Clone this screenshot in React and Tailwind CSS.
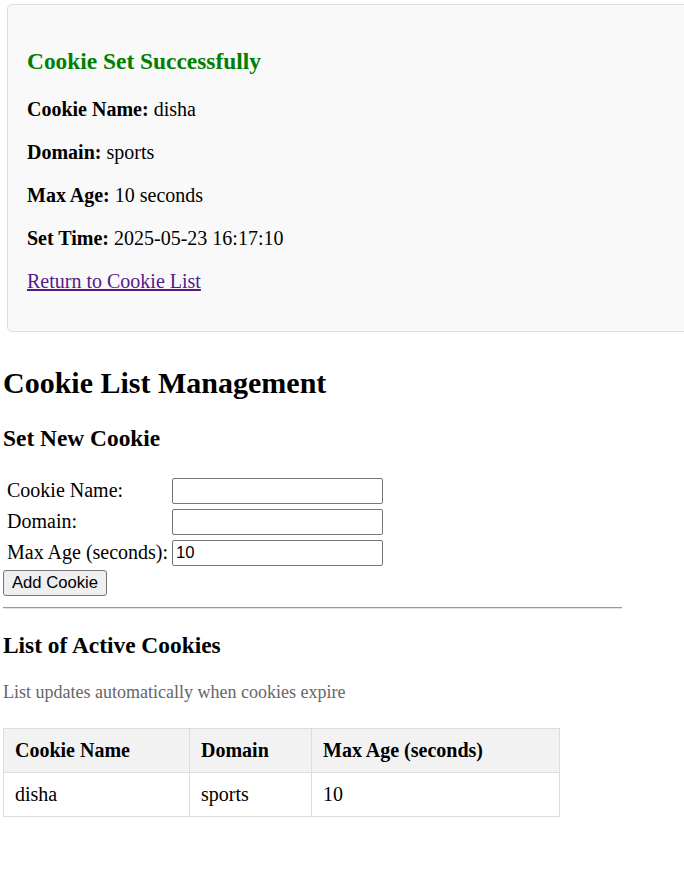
import { useState } from "react";

const serif = "font-['Liberation_Serif','Times_New_Roman',serif]";
const sans = "font-['Liberation_Sans',Arial,sans-serif]";

const cookies = [{ name: "disha", domain: "sports", maxAge: 10 }];

const Detail = ({ label, value, first }) => (
  <p className={`${first ? "mt-[23px]" : "mt-[20px]"} text-[20px] leading-[23px]`}>
    <b>{label}</b> {value}
  </p>
);

const App = () => {
  const [name, setName] = useState("");
  const [domain, setDomain] = useState("");
  const [maxAge, setMaxAge] = useState("10");

  const inputCls = `h-[26px] w-[211px] border border-[#767676] rounded-[2px] bg-white px-[3px] text-[16.67px] text-black ${sans}`;

  return (
    <div className={`${serif} text-black bg-white min-h-[882px] w-[684px] overflow-hidden flex flex-col`}>
      {/* success card */}
      <div className="mt-[4px] ml-[7px] w-[700px] border border-[#dddddd] rounded-[5px] bg-[#f9f9f9] px-[19px] pt-[20px] pb-[38px] flex flex-col">
        <h3 className="mt-[23px] text-[23.4px] leading-[27px] font-bold text-[#008000]">
          Cookie Set Successfully
        </h3>
        <Detail first label="Cookie Name:" value="disha" />
        <Detail label="Domain:" value="sports" />
        <Detail label="Max Age:" value="10 seconds" />
        <Detail label="Set Time:" value="2025-05-23 16:17:10" />
        <p className="mt-[20px] text-[20px] leading-[23px]">
          <a href="#" className="text-[#551a8b] underline">Return to Cookie List</a>
        </p>
      </div>

      <div className="px-[3px] flex flex-col">
        <h1 className="mt-[34px] text-[30px] leading-[34px] font-bold">Cookie List Management</h1>

        <h3 className="mt-[24.5px] text-[23.4px] leading-[27px] font-bold">Set New Cookie</h3>

        <div className="mt-[26px] ml-[4px] grid grid-cols-[max-content_211px] gap-x-[4px] gap-y-[5px] items-center text-[20px] leading-[23px]">
          <label>Cookie Name:</label>
          <input className={inputCls} value={name} onChange={e => setName(e.target.value)} />
          <label>Domain:</label>
          <input className={inputCls} value={domain} onChange={e => setDomain(e.target.value)} />
          <label>Max Age (seconds):</label>
          <input className={inputCls} value={maxAge} onChange={e => setMaxAge(e.target.value)} />
        </div>

        <div className="mt-[4px]">
          <button className={`h-[26px] w-[104px] border border-[#767676] rounded-[3px] bg-[#efefef] text-[16.67px] leading-[20px] ${sans}`}>
            Add Cookie
          </button>
        </div>

        <hr className="mt-[11px] w-[619px] h-0 border-0 border-t border-t-[#9a9a9a] border-b border-b-[#e5e5e5]" />

        <h3 className="mt-[23.5px] text-[23.4px] leading-[27px] font-bold">List of Active Cookies</h3>
        <p className="mt-[23px] text-[18px] leading-[21px] text-[#666666]">
          List updates automatically when cookies expire
        </p>

        <table className="mt-[24.5px] w-[557px] border-collapse text-[20px] leading-[23px]">
          <thead>
            <tr className="bg-[#f2f2f2]">
              <th className="w-[186px] border border-[#dddddd] px-[11px] py-[10px] text-left font-bold">Cookie Name</th>
              <th className="w-[122px] border border-[#dddddd] px-[11px] py-[10px] text-left font-bold">Domain</th>
              <th className="border border-[#dddddd] px-[11px] py-[10px] text-left font-bold">Max Age (seconds)</th>
            </tr>
          </thead>
          <tbody>
            {cookies.map(c => (
              <tr key={c.name}>
                <td className="border border-[#dddddd] px-[11px] py-[10px]">{c.name}</td>
                <td className="border border-[#dddddd] px-[11px] py-[10px]">{c.domain}</td>
                <td className="border border-[#dddddd] px-[11px] py-[10px]">{c.maxAge}</td>
              </tr>
            ))}
          </tbody>
        </table>
      </div>
    </div>
  );
};

export default App;
